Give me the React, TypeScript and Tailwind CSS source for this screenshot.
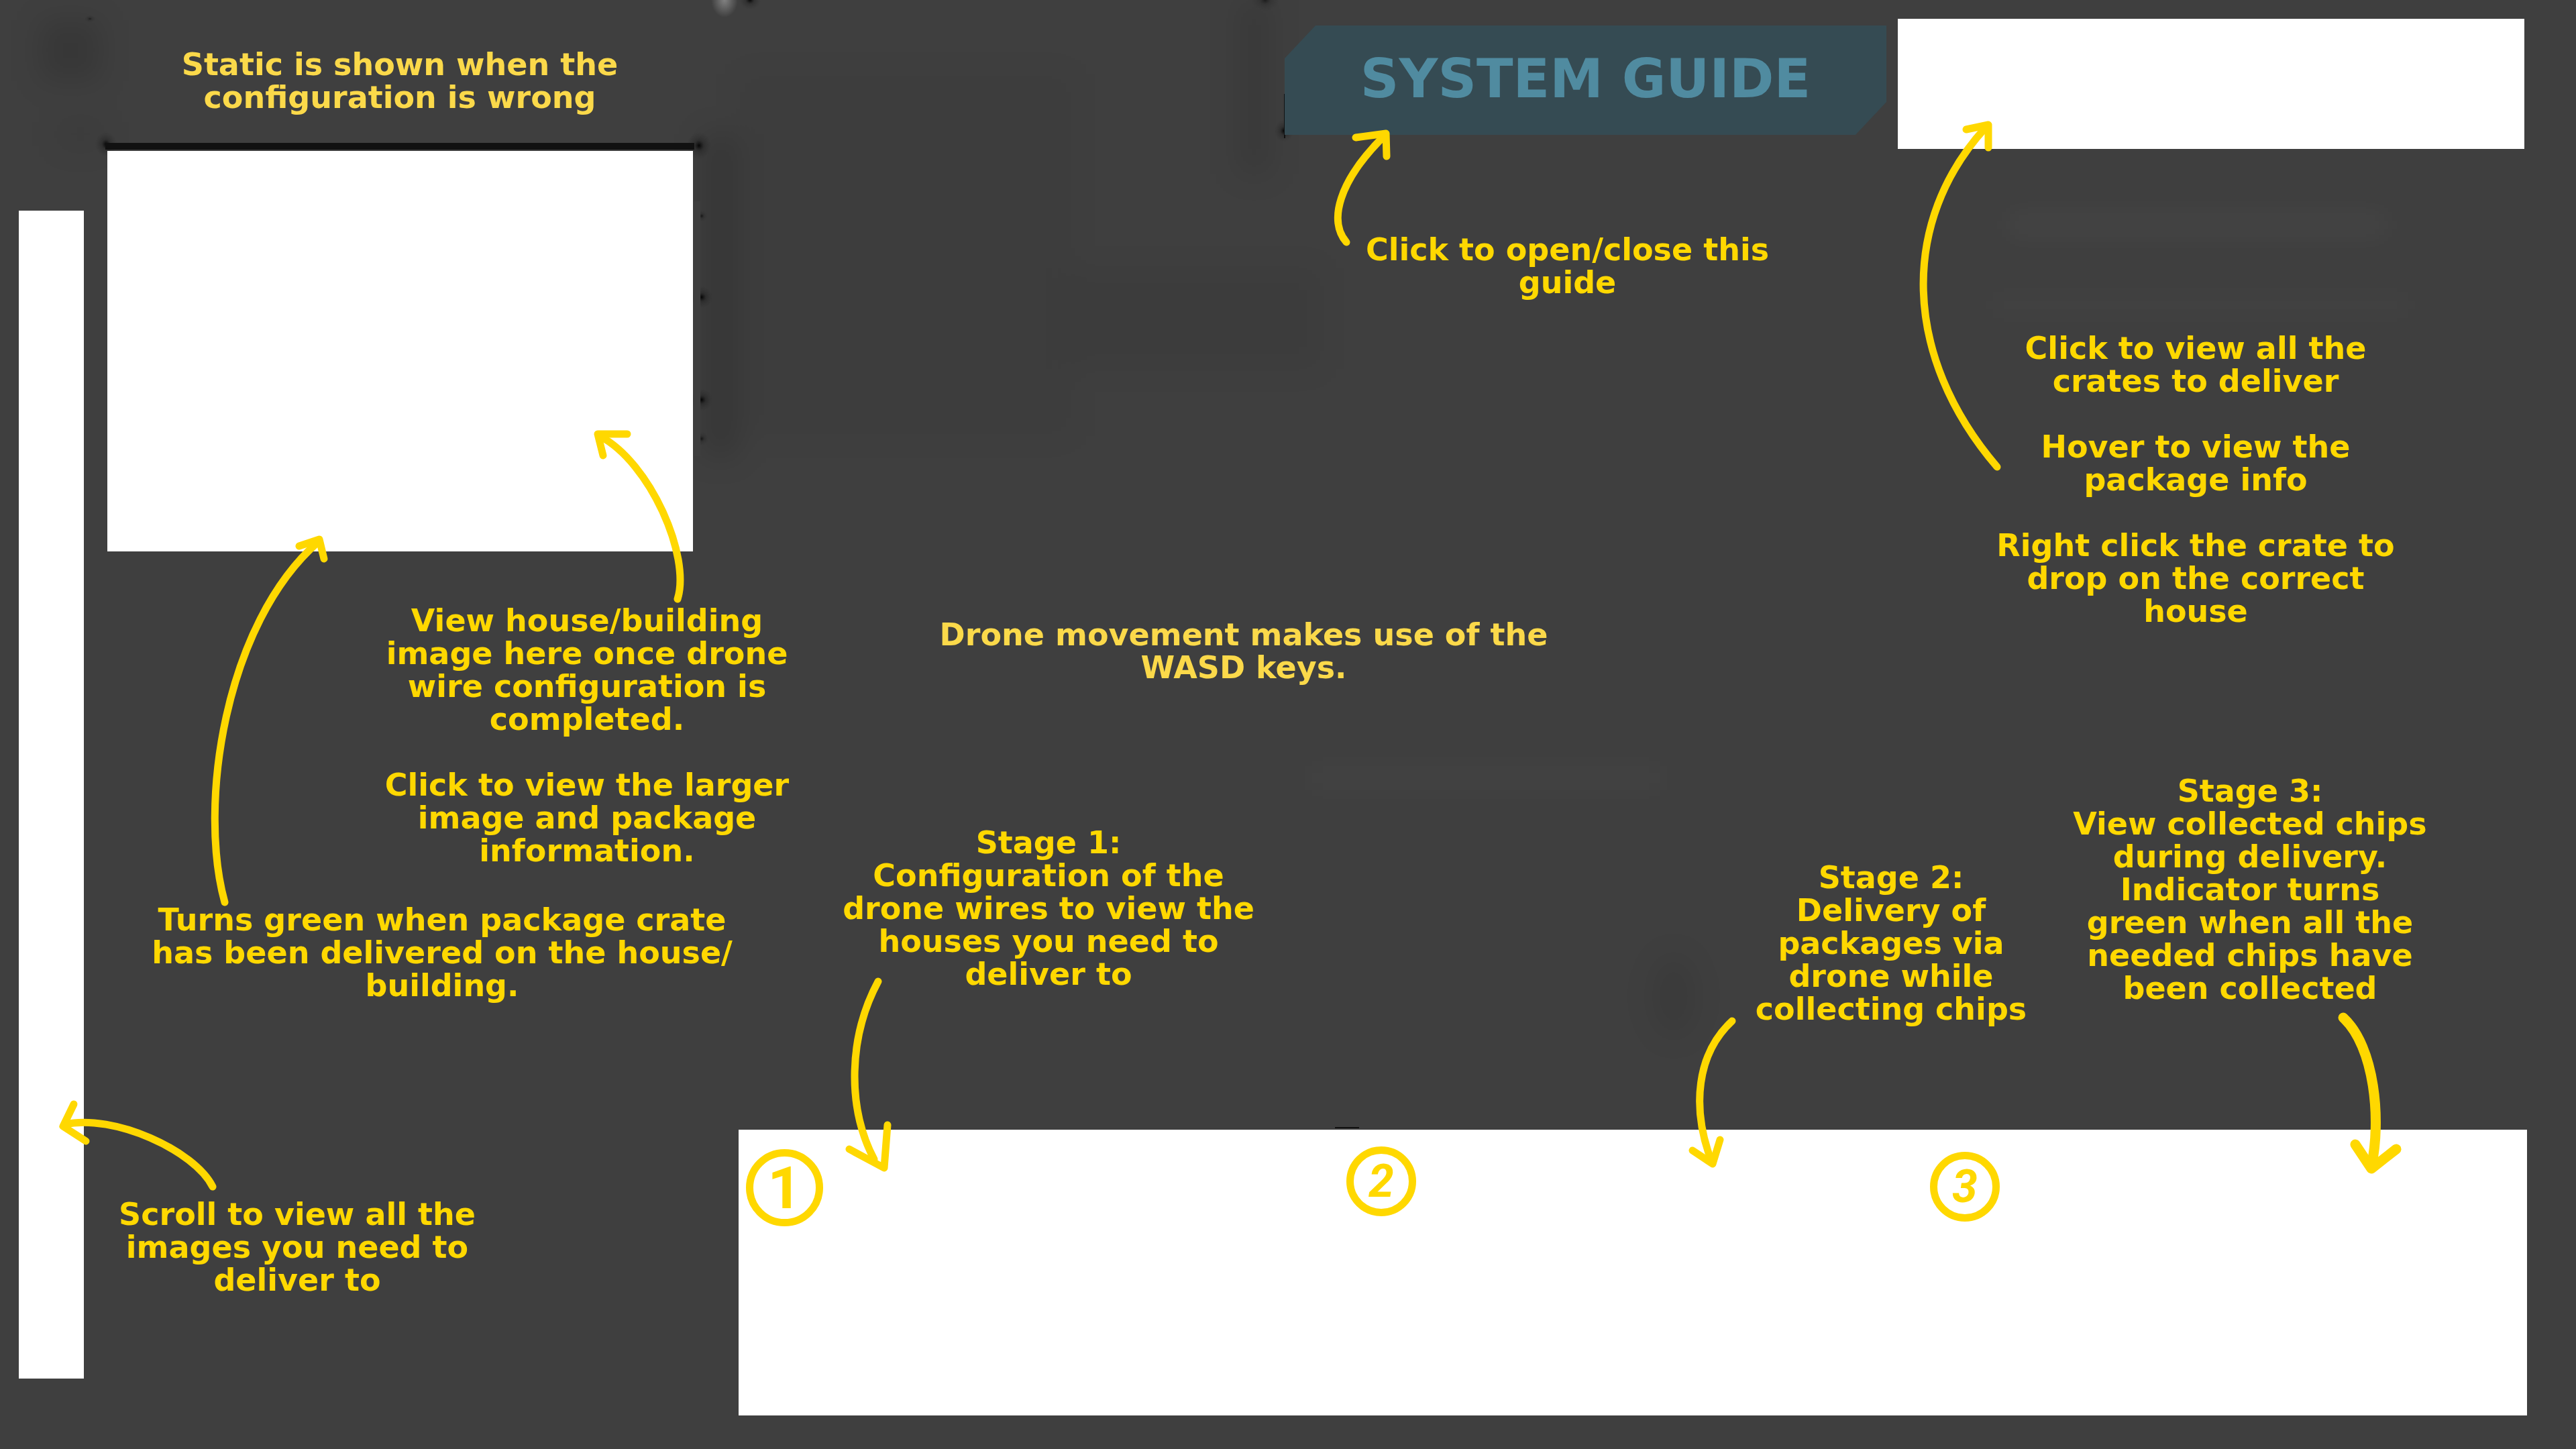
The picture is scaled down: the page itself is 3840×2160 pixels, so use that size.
import type { ReactNode } from "react";

type NoteProps = { children: string; soft?: boolean; className?: string };

function Note({ children, soft = false, className = "" }: NoteProps) {
  const tone = soft ? "text-[#fbd94a]" : "text-[#ffd800]";
  return (
    <div className={`flex justify-center ${className}`}>
      <p
        className={`w-max shrink-0 whitespace-pre text-center text-[46px] font-bold leading-[49px] ${tone}`}
      >
        {children}
      </p>
    </div>
  );
}

function StageBadge({ children, className = "" }: { children: ReactNode; className?: string }) {
  return (
    <span
      className={`flex items-center justify-center rounded-full border-[11px] border-[#ffd800] font-['Roboto',sans-serif] font-bold leading-none text-[#ffd800] ${className}`}
    >
      {children}
    </span>
  );
}

function Smudges() {
  return (
    <svg
      aria-hidden="true"
      viewBox="0 0 3840 2160"
      preserveAspectRatio="none"
      className="pointer-events-none absolute inset-0 h-full w-full"
    >
      <defs>
        <filter id="soft" x="-50%" y="-50%" width="200%" height="200%">
          <feGaussianBlur stdDeviation="22" />
        </filter>
        <radialGradient id="ink">
          <stop offset="0" stopColor="#000" stopOpacity="0.9" />
          <stop offset="0.4" stopColor="#111" stopOpacity="0.3" />
          <stop offset="1" stopColor="#222" stopOpacity="0" />
        </radialGradient>
        <radialGradient id="glow">
          <stop offset="0" stopColor="#fff" stopOpacity="0.35" />
          <stop offset="1" stopColor="#fff" stopOpacity="0" />
        </radialGradient>
      </defs>
      <g filter="url(#soft)">
        <rect x="60" y="30" width="90" height="90" fill="#000" opacity="0.12" />
        <rect x="85" y="180" width="70" height="40" fill="#000" opacity="0.06" />
        <rect x="1048" y="200" width="50" height="480" fill="#000" opacity="0.14" />
        <rect x="1100" y="110" width="500" height="540" fill="#000" opacity="0.03" />
        <rect x="1590" y="400" width="380" height="150" fill="#000" opacity="0.04" />
        <rect x="1845" y="0" width="50" height="260" fill="#000" opacity="0.09" />
        <rect x="2990" y="320" width="570" height="30" fill="#fff" opacity="0.035" />
        <rect x="2960" y="440" width="640" height="30" fill="#fff" opacity="0.02" />
        <rect x="1945" y="1140" width="540" height="40" fill="#fff" opacity="0.02" />
        <ellipse cx="2495" cy="1485" rx="30" ry="60" fill="#000" opacity="0.08" />
      </g>
      <ellipse cx="1080" cy="0" rx="20" ry="26" fill="url(#glow)" />
      <ellipse cx="1118" cy="0" rx="16" ry="14" fill="url(#ink)" />
      <ellipse cx="134" cy="28" rx="8" ry="5" fill="url(#ink)" opacity="0.6" />
      <ellipse cx="158" cy="215" rx="16" ry="18" fill="url(#ink)" />
      <ellipse cx="1042" cy="217" rx="18" ry="20" fill="url(#ink)" />
      <ellipse cx="1046" cy="322" rx="8" ry="8" fill="url(#ink)" opacity="0.7" />
      <ellipse cx="1046" cy="443" rx="16" ry="16" fill="url(#ink)" />
      <ellipse cx="1046" cy="596" rx="16" ry="16" fill="url(#ink)" />
      <ellipse cx="1046" cy="654" rx="10" ry="10" fill="url(#ink)" opacity="0.7" />
      <rect x="1034" y="300" width="10" height="380" fill="#3f3f3f" />
      <ellipse cx="1886" cy="0" rx="20" ry="16" fill="url(#ink)" opacity="0.6" />
      <ellipse cx="1914" cy="195" rx="14" ry="16" fill="url(#ink)" />
      <path d="M1915 140V206M1990 1681H2026" stroke="#111" strokeWidth="2" />
    </svg>
  );
}

const ARROWS = [
  { shaft: "M2007 361C1980 330 1995 270 2064 202", head: "M2021 205L2066 199L2067 233", width: 11 },
  { shaft: "M2977 696C2835 530 2832 330 2960 190", head: "M2931 193L2964 186L2964 220", width: 11 },
  { shaft: "M1010 893C1030 830 970 690 894 650", head: "M935 647L891 647L899 679", width: 11 },
  { shaft: "M335 1345C295 1200 335 930 474 808", head: "M446 814L476 804L483 833", width: 11 },
  { shaft: "M317 1769C290 1715 170 1660 96 1676", head: "M110 1646L94 1679L128 1701", width: 11 },
  { shaft: "M1309 1463C1265 1545 1262 1650 1303 1728", head: "M1266 1713L1318 1741L1323 1677", width: 11 },
  { shaft: "M2582 1522C2530 1570 2520 1650 2552 1733", head: "M2523 1715L2553 1735L2564 1699", width: 11 },
  { shaft: "M3493 1517C3540 1560 3550 1670 3535 1738", head: "M3511 1706L3535 1742L3572 1713", width: 15 },
];

function Arrows() {
  return (
    <svg
      aria-hidden="true"
      viewBox="0 0 3840 2160"
      preserveAspectRatio="none"
      className="pointer-events-none absolute inset-0 h-full w-full"
      fill="none"
      stroke="#ffd800"
      strokeLinecap="round"
      strokeLinejoin="round"
    >
      {ARROWS.map((arrow) => (
        <g key={arrow.shaft} strokeWidth={arrow.width}>
          <path d={arrow.shaft} />
          <path d={arrow.head} />
        </g>
      ))}
    </svg>
  );
}

export default function App() {
  return (
    <div className="relative min-h-screen overflow-hidden bg-[#3f3f3f] font-['DejaVu_Sans',sans-serif]">
      <Smudges />
      <div className="relative grid min-h-screen grid-cols-[157fr_878fr_66fr_2739fr]">
        <aside aria-label="Delivery images" className="pb-[105px] pl-[28px] pr-[32px] pt-[314px]">
          <div className="h-full bg-white" />
        </aside>

        <section aria-label="Camera view" className="min-w-0 pt-[72px]">
          <Note soft>{"Static is shown when the\nconfiguration is wrong"}</Note>
          <div className="mt-[43px] h-[10px] bg-[#111111]" />
          <div className="ml-[3px] mr-[2px] mt-[2px] h-[597px] bg-white" />
          <Note className="mt-[79px] pl-[558px]">
            {
              "View house/building\nimage here once drone\nwire configuration is\ncompleted.\n\nClick to view the larger\nimage and package\ninformation."
            }
          </Note>
          <Note className="mt-[54px] pl-[126px]">
            {"Turns green when package crate\nhas been delivered on the house/\nbuilding."}
          </Note>
          <Note className="mt-[292px] pr-[306px]">
            {"Scroll to view all the\nimages you need to\ndeliver to"}
          </Note>
        </section>

        <main className="col-start-4 flex min-w-0 flex-col">
          <div className="grid grid-cols-[814fr_897fr_17fr_934fr_77fr]">
            <div className="col-start-2 pt-[38px]">
              <button
                type="button"
                className="flex h-[163px] w-full items-center justify-center bg-[#354b53] pb-[4px] text-[80px] font-bold leading-none text-[#508ba0] [clip-path:polygon(46px_0,100%_0,100%_calc(100%-49px),calc(100%-46px)_100%,0_100%,0_49px)]"
              >
                SYSTEM GUIDE
              </button>
              <Note className="mt-[147px] pr-[54px]">{"Click to open/close this\nguide"}</Note>
            </div>
            <section aria-label="Crates" className="col-start-4 row-span-2 pt-[28px]">
              <div className="h-[194px] bg-white" />
              <Note className="mt-[273px] pr-[46px]">
                {
                  "Click to view all the\ncrates to deliver\n\nHover to view the\npackage info\n\nRight click the crate to\ndrop on the correct\nhouse"
                }
              </Note>
            </section>
            <Note soft className="col-span-2 col-start-1 mt-[476px] pr-[205px]">
              {"Drone movement makes use of the\nWASD keys."}
            </Note>
          </div>

          <div className="mt-[135px] grid flex-1 grid-cols-[924fr_559fr_470fr_600fr_186fr]">
            <Note className="pt-[77px]">
              {
                "Stage 1:\nConfiguration of the\ndrone wires to view the\nhouses you need to\ndeliver to"
              }
            </Note>
            <Note className="col-start-3 pt-[129px]">
              {"Stage 2:\nDelivery of\npackages via\ndrone while\ncollecting chips"}
            </Note>
            <Note className="col-start-4">
              {
                "Stage 3:\nView collected chips\nduring delivery.\nIndicator turns\ngreen when all the\nneeded chips have\nbeen collected"
              }
            </Note>
          </div>

          <section
            aria-label="Stages"
            className="mb-[50px] mr-[73px] grid h-[426px] grid-cols-[895fr_870fr_901fr] bg-white"
          >
            <div className="pl-[11px] pt-[29px]">
              <StageBadge className="size-[115px] text-[88px]">1</StageBadge>
            </div>
            <div className="pl-[11px] pt-[25px]">
              <StageBadge className="size-[104px] text-[68px] italic">2</StageBadge>
            </div>
            <div className="pl-[11px] pt-[33px]">
              <StageBadge className="size-[104px] text-[68px] italic">3</StageBadge>
            </div>
          </section>
        </main>
      </div>
      <Arrows />
    </div>
  );
}
